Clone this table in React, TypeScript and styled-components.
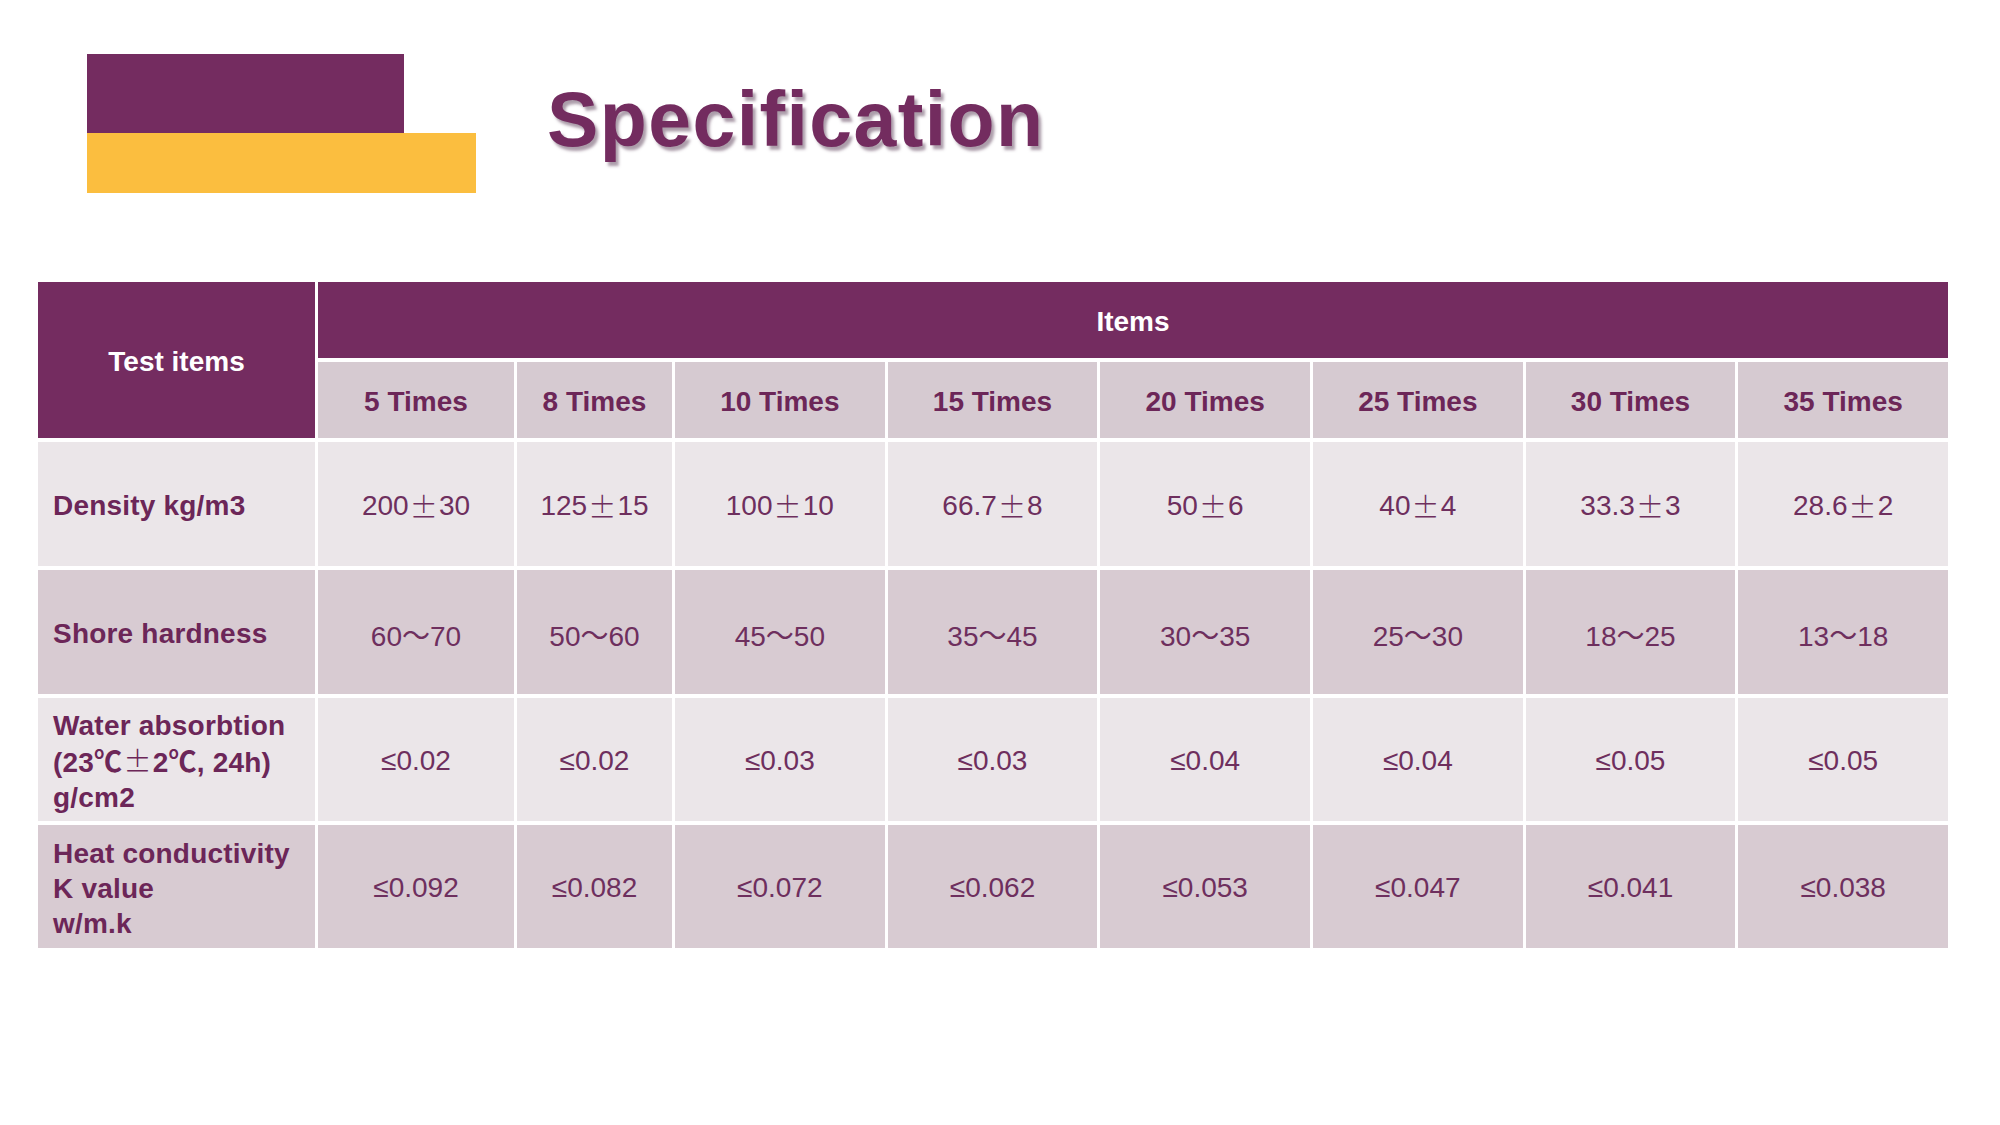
import React from "react";
import styled, { createGlobalStyle } from "styled-components";

const GlobalStyle = createGlobalStyle`
  html, body {
    margin: 0;
    padding: 0;
    background: #ffffff;
  }
  body {
    font-family: "Liberation Sans", "Noto Sans CJK SC", Arial, sans-serif;
  }
`;

const PURPLE = "#742c60";
const TEXT = "#6c2658";

const Page = styled.div`
  width: 2000px;
  height: 1125px;
  box-sizing: border-box;
  padding-top: 54px;
  overflow: hidden;
`;

const Header = styled.header`
  display: flex;
  align-items: flex-start;
  gap: 71px;
  padding-left: 87px;
`;

const Logo = styled.div`
  display: flex;
  flex-direction: column;
  width: 389px;
`;

const LogoBar = styled.div<{ $w: number; $h: number; $color: string }>`
  width: ${(p) => p.$w}px;
  height: ${(p) => p.$h}px;
  background: ${(p) => p.$color};
`;

const Title = styled.h1`
  margin: 27px 0 0;
  font-size: 77px;
  line-height: 1;
  font-weight: 700;
  letter-spacing: 1.4px;
  color: #732c5f;
  text-shadow: 3px 4px 3px rgba(90, 60, 85, 0.5);
`;

const Table = styled.div`
  display: grid;
  margin: 89px 52px 0 38px;
  grid-template-columns: 277px 196px 155px repeat(6, 1fr);
  grid-template-rows: 76px 76px 124px 124px 123px 123px;
  column-gap: 3px;
  row-gap: 4px;
`;

const HeadCell = styled.div<{ $row?: string; $col?: string }>`
  grid-row: ${(p) => p.$row || "auto"};
  grid-column: ${(p) => p.$col || "auto"};
  background: ${PURPLE};
  color: #ffffff;
  font-weight: 700;
  font-size: 28px;
  display: flex;
  align-items: center;
  justify-content: center;
  padding-top: 3px;
`;

const SubHead = styled.div`
  background: #d6cad1;
  color: ${TEXT};
  font-weight: 700;
  font-size: 28px;
  display: flex;
  align-items: center;
  justify-content: center;
  padding-top: 3px;
`;

const tones: Record<string, string> = {
  light: "#ebe6e9",
  dark: "#d8cbd2",
};

const LabelCell = styled.div<{ $tone: "light" | "dark" }>`
  background: ${(p) => tones[p.$tone]};
  color: ${TEXT};
  font-weight: 700;
  font-size: 28px;
  line-height: 35px;
  display: flex;
  align-items: center;
  padding: 3px 0 0 15px;
  letter-spacing: 0.2px;
`;

const ValueCell = styled.div<{ $tone: "light" | "dark" }>`
  background: ${(p) => tones[p.$tone]};
  color: #6e2f5e;
  font-size: 28px;
  display: flex;
  align-items: center;
  justify-content: center;
  padding-top: 3px;
`;

const Pm = styled.span`
  font-family: "Noto Sans CJK SC", "DejaVu Sans", sans-serif;
  font-weight: 300;
  margin: 0 0.04em;
`;

const withPm = (s: string) => {
  const parts = s.split("±");
  return parts.map((p, i) => (
    <React.Fragment key={i}>
      {i > 0 && <Pm>±</Pm>}
      {p}
    </React.Fragment>
  ));
};

const columns = [
  "5 Times",
  "8 Times",
  "10 Times",
  "15 Times",
  "20 Times",
  "25 Times",
  "30 Times",
  "35 Times",
];

const rows: { label: string[]; values: string[]; tone: "light" | "dark" }[] = [
  {
    label: ["Density kg/m3"],
    values: ["200±30", "125±15", "100±10", "66.7±8", "50±6", "40±4", "33.3±3", "28.6±2"],
    tone: "light",
  },
  {
    label: ["Shore hardness"],
    values: ["60～70", "50～60", "45～50", "35～45", "30～35", "25～30", "18～25", "13～18"],
    tone: "dark",
  },
  {
    label: ["Water absorbtion", "(23℃±2℃, 24h)", "g/cm2"],
    values: ["≤0.02", "≤0.02", "≤0.03", "≤0.03", "≤0.04", "≤0.04", "≤0.05", "≤0.05"],
    tone: "light",
  },
  {
    label: ["Heat conductivity", "K value", "w/m.k"],
    values: ["≤0.092", "≤0.082", "≤0.072", "≤0.062", "≤0.053", "≤0.047", "≤0.041", "≤0.038"],
    tone: "dark",
  },
];

export default function App() {
  return (
    <>
      <GlobalStyle />
      <Page>
        <Header>
          <Logo>
            <LogoBar $w={317} $h={79} $color={PURPLE} />
            <LogoBar $w={389} $h={60} $color="#fbbe3f" />
          </Logo>
          <Title>Specification</Title>
        </Header>
        <Table>
          <HeadCell $row="1 / 3" $col="1">Test items</HeadCell>
          <HeadCell $row="1" $col="2 / 10">Items</HeadCell>
          {columns.map((c) => (
            <SubHead key={c}>{c}</SubHead>
          ))}
          {rows.map((r) => (
            <React.Fragment key={r.label[0]}>
              <LabelCell $tone={r.tone}>
                <div>
                  {r.label.map((l, i) => (
                    <div key={i}>{withPm(l)}</div>
                  ))}
                </div>
              </LabelCell>
              {r.values.map((v, i) => (
                <ValueCell key={i} $tone={r.tone}>
                  {withPm(v)}
                </ValueCell>
              ))}
            </React.Fragment>
          ))}
        </Table>
      </Page>
    </>
  );
}
